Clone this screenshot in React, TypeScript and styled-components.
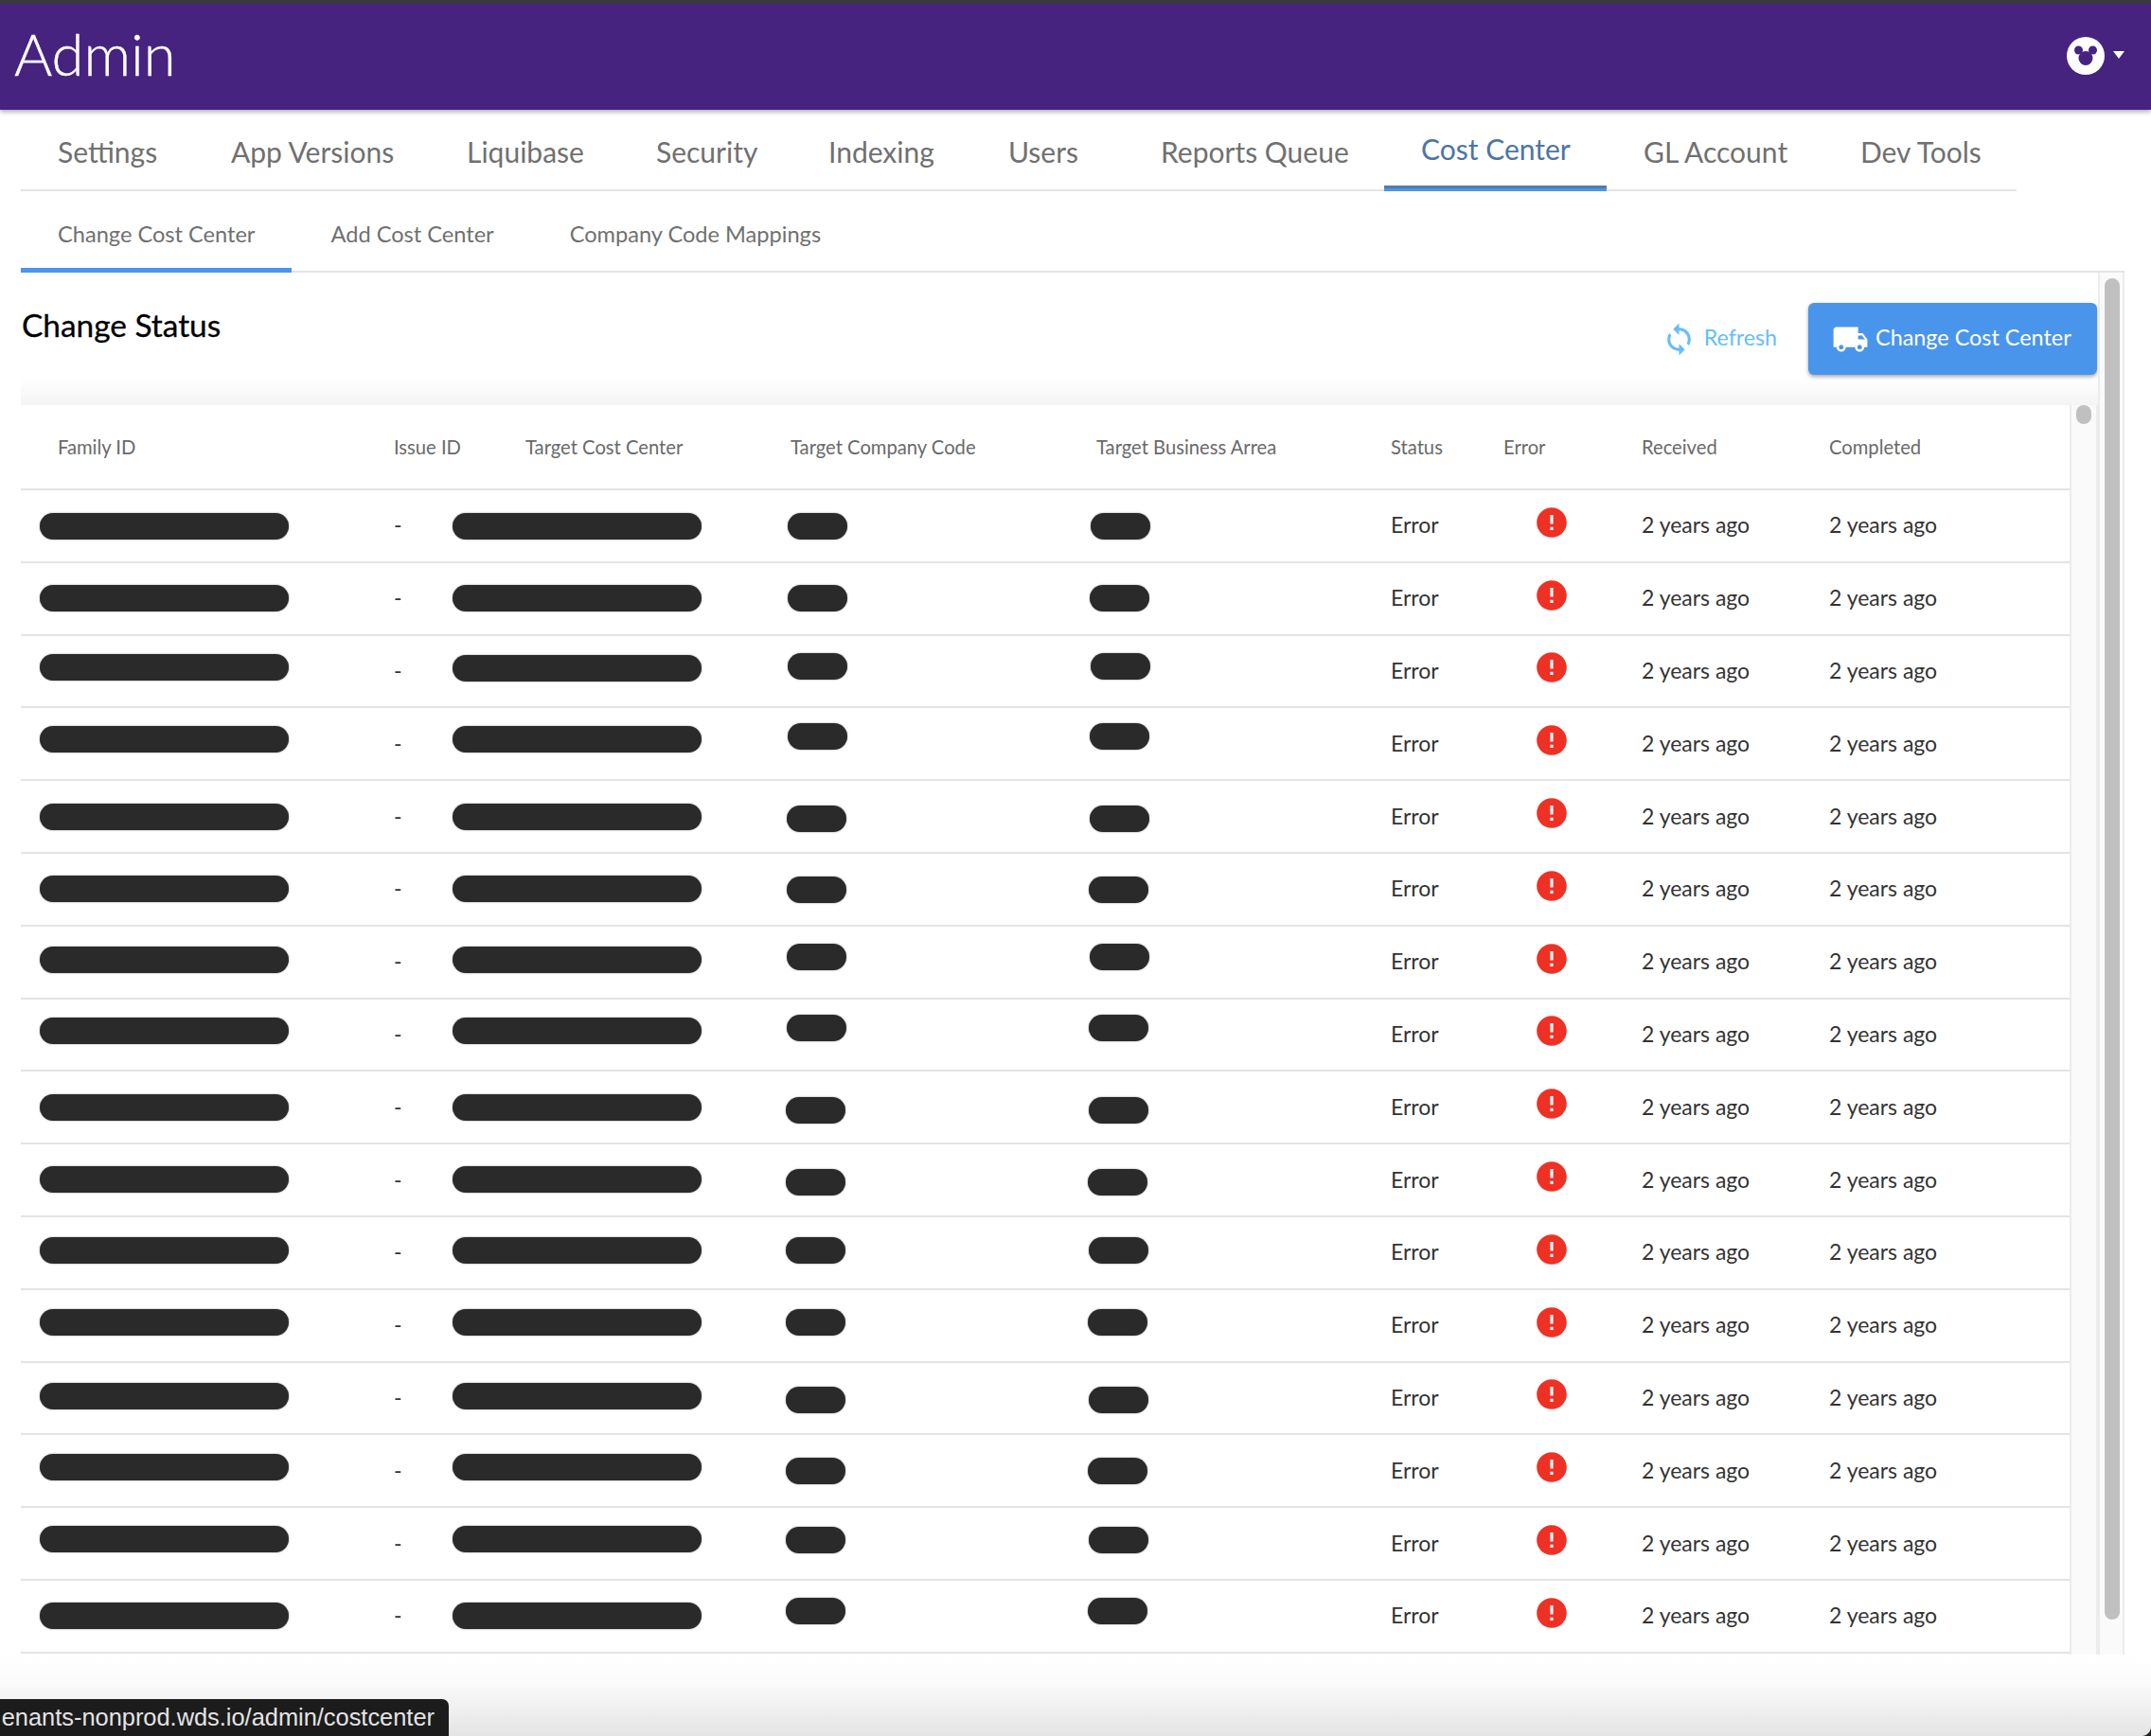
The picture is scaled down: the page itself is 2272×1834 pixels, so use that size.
import React from "react";
import styled, { createGlobalStyle } from "styled-components";
import { MdError, MdLocalShipping, MdSync } from "react-icons/md";

const Global = createGlobalStyle`
  html, body { margin: 0; padding: 0; background: #fff; }
  body { font-family: Lato, "Open Sans", "Liberation Sans", sans-serif; }
  * { box-sizing: border-box; }
`;

const Page = styled.div`
  position: relative;
  width: 2272px;
  height: 1834px;
  overflow: hidden;
  background: #fff;
  display: flex;
  flex-direction: column;
`;

const TopBar = styled.header`
  height: 116px;
  flex: none;
  background: #45237f;
  border-top: 4px solid #3a3a3a;
  box-shadow: 0 2px 5px rgba(0, 0, 0, 0.35);
  display: flex;
  align-items: center;
  justify-content: space-between;
  padding: 0 28px 0 15px;
  position: relative;
  z-index: 2;
`;

const Brand = styled.h1`
  margin: 0;
  font-size: 61.5px;
  line-height: 1;
  font-weight: 300;
  color: #fff;
  -webkit-text-stroke: 0.4px #fff;
  padding-bottom: 6px;
`;

const UserMenu = styled.div`
  display: flex;
  align-items: center;
  gap: 9px;
  padding-bottom: 3px;
`;

const Caret = styled.span`
  width: 0;
  height: 0;
  border-left: 6px solid transparent;
  border-right: 6px solid transparent;
  border-top: 8px solid #fff;
  margin-bottom: 2px;
`;

const MainTabs = styled.nav`
  display: flex;
  margin: 0 0 0 22px;
  width: 2108px;
  height: 86px;
  flex: none;
  border-bottom: 2px solid #e4e4e4;
`;

const MainTab = styled.div<{ $active?: boolean; $width: number }>`
  width: ${(p) => p.$width}px;
  flex: none;
  padding: ${(p) => (p.$active ? "23px" : "26px")} 0 0 39px;
  font-size: 30px;
  line-height: 36px;
  white-space: nowrap;
  color: ${(p) => (p.$active ? "#4d74a6" : "#707070")};
  ${(p) =>
    p.$active
      ? `height: 86px; border-bottom: 3px solid #4a95ec; box-shadow: inset 0 -3px 0 #567aa8;`
      : ""}
`;

const SubTabs = styled.nav`
  display: flex;
  margin-left: 22px;
  width: 2222px;
  height: 86px;
  flex: none;
  border-bottom: 2px solid #e4e4e4;
`;

const SubTab = styled.div<{ $active?: boolean }>`
  padding: 30px 39px 0;
  margin-right: 2px;
  font-size: 23.6px;
  line-height: 30px;
  height: 86px;
  white-space: nowrap;
  color: #707070;
  border-bottom: 5px solid ${(p) => (p.$active ? "#4a95ec" : "transparent")};
`;

const Panel = styled.section`
  display: flex;
  margin-left: 22px;
  width: 2222px;
  height: 1460px;
  flex: none;
`;

const PanelBody = styled.div`
  width: 2194px;
  flex: none;
  display: flex;
  flex-direction: column;
`;

const Track = styled.div<{ $width: number; $pad: number }>`
  width: ${(p) => p.$width}px;
  flex: none;
  background: #fafafa;
  border-left: 2px solid #ececec;
  border-right: 2px solid #ececec;
  padding: ${(p) => p.$pad}px 5px 0 5px;
`;

const Thumb = styled.div<{ $height: number; $width: number }>`
  width: ${(p) => p.$width}px;
  height: ${(p) => p.$height}px;
  border-radius: 8px;
  background: #c0c0c0;
`;

const PanelHead = styled.div`
  height: 140px;
  flex: none;
  display: flex;
  justify-content: space-between;
  padding: 0 1px 0 1px;
  background: linear-gradient(to bottom, #fff 0, #fff 112px, #f4f4f4 140px);
`;

const Title = styled.h2`
  margin: 35px 0 0;
  font-size: 33.4px;
  line-height: 40px;
  font-weight: 400;
  -webkit-text-stroke: 0.3px #000;
  color: #000;
`;

const Actions = styled.div`
  display: flex;
  align-items: flex-start;
  padding-top: 32px;
`;

const RefreshButton = styled.button`
  display: flex;
  align-items: center;
  gap: 8px;
  height: 76px;
  padding: 0 33px 0 0;
  border: 0;
  background: none;
  font: inherit;
  font-size: 23.2px;
  color: #66bdf9;
`;

const PrimaryButton = styled.button`
  display: flex;
  align-items: center;
  gap: 7px;
  width: 305px;
  height: 76px;
  padding: 0 0 0 25px;
  border: 0;
  border-radius: 6px;
  background: #4a95ec;
  box-shadow: 0 2px 4px rgba(0, 0, 0, 0.35);
  font: inherit;
  font-size: 23.4px;
  color: #fff;
  white-space: nowrap;
`;

const ButtonLabel = styled.span`
  margin-bottom: 5px;
`;

const TableWrap = styled.div`
  display: flex;
  height: 1320px;
  flex: none;
`;

const Table = styled.div`
  width: 2164px;
  flex: none;
`;

const columns = "394px 139px 280px 323px 311px 119px 146px 198px 1fr";

const HeadRow = styled.div`
  display: grid;
  grid-template-columns: ${columns};
  align-items: center;
  height: 90px;
  border-bottom: 2px solid #e4e4e4;
  font-size: 20.2px;
  color: #6a6a6a;
  white-space: nowrap;
`;

const Row = styled.div`
  display: grid;
  grid-template-columns: ${columns};
  align-items: center;
  height: 76.8px;
  border-bottom: 2px solid #e4e4e4;
  font-size: 23px;
  color: #333;
  white-space: nowrap;
`;

const HeadCell = styled.div<{ $first?: boolean }>`
  padding-left: ${(p) => (p.$first ? "39px" : "0")};
`;

const Cell = styled.div`
  position: relative;
  padding-bottom: 2px;
`;

const Redaction = styled.span<{ $left: number; $width: number; $dy: number }>`
  position: absolute;
  left: ${(p) => p.$left}px;
  top: 50%;
  width: ${(p) => p.$width}px;
  height: 28px;
  margin-top: ${(p) => p.$dy - 14}px;
  border-radius: 14px;
  background: #2a2a2a;
  box-shadow: 0 0 2px rgba(0, 0, 0, 0.45);
`;

const ErrorMark = styled.span`
  display: flex;
  width: 38px;
  margin-left: 32px;
  margin-bottom: 5px;
  color: #ee3124;
`;

const Footer = styled.div`
  flex: 1;
  background: linear-gradient(to bottom, #fff 0, #fcfcfc 30%, #e4e4e4 100%);
`;

const StatusBubble = styled.div`
  position: absolute;
  left: 0;
  bottom: 0;
  width: 474px;
  height: 39px;
  overflow: hidden;
  display: flex;
  justify-content: flex-end;
  align-items: center;
  padding-right: 15px;
  border-top-right-radius: 7px;
  background: #1c1c1c;
  color: #e4e4e4;
  font-family: "Liberation Sans", Arial, sans-serif;
  font-size: 25.4px;
  white-space: nowrap;
`;

const WindowCorner = styled.div`
  position: absolute;
  right: 0;
  bottom: 0;
  width: 10px;
  height: 10px;
  background: radial-gradient(circle at 0 0, transparent 9.5px, #222 10.5px);
`;

const companyDy = [0.7, -0.7, -5, -8, 2, 0.7, -5, -6.5, 3.6, 2, -2, -3.6, 2, 0.7, -3.6, -5];
const familyDy = [0.7, -0.7, -3.6, -5, 0.7, -0.7, -2, -3.6, 0.7, -0.7, -2, -3.6, -2, -3.6, -5, -0.7];
const costDy = [0.7, -0.7, -2.5, -5, 0.7, -0.7, -2, -3.6, 0.7, -0.7, -2, -3.6, -2, -3.6, -5, -0.7];
const companyLeft = [-3, -3, -3, -3, -4, -4, -4, -4, -5, -5, -5, -5, -5, -5, -5, -5];
const businessLeft = [-6, -7, -6, -7, -7, -8, -7, -8, -8, -9, -8, -9, -8, -9, -8, -9];

const tabs: [string, number][] = [
  ["Settings", 183],
  ["App Versions", 249],
  ["Liquibase", 200],
  ["Security", 182],
  ["Indexing", 190],
  ["Users", 161],
  ["Reports Queue", 275],
  ["Cost Center", 235],
  ["GL Account", 229],
  ["Dev Tools", 220],
];
const subTabs = ["Change Cost Center", "Add Cost Center", "Company Code Mappings"];
const heads = ["Family ID", "Issue ID", "Target Cost Center", "Target Company Code", "Target Business Arrea", "Status", "Error", "Received", "Completed"];

function MouseAvatar() {
  return (
    <svg width="40" height="40" viewBox="0 0 40 40" aria-hidden="true">
      <circle cx="20" cy="20" r="20" fill="#fff" />
      <circle cx="20" cy="22.5" r="7.5" fill="#45237f" />
      <circle cx="12.5" cy="14" r="4.5" fill="#45237f" />
      <circle cx="27.5" cy="14" r="4.5" fill="#45237f" />
    </svg>
  );
}

export default function App() {
  return (
    <Page>
      <Global />
      <TopBar>
        <Brand>Admin</Brand>
        <UserMenu>
          <MouseAvatar />
          <Caret />
        </UserMenu>
      </TopBar>
      <MainTabs>
        {tabs.map(([t, w]) => (
          <MainTab key={t} $width={w} $active={t === "Cost Center"}>{t}</MainTab>
        ))}
      </MainTabs>
      <SubTabs>
        {subTabs.map((t, i) => (
          <SubTab key={t} $active={i === 0}>{t}</SubTab>
        ))}
      </SubTabs>
      <Panel>
        <PanelBody>
          <PanelHead>
            <Title>Change Status</Title>
            <Actions>
              <RefreshButton>
                <MdSync size={37} />
                <ButtonLabel>Refresh</ButtonLabel>
              </RefreshButton>
              <PrimaryButton>
                <MdLocalShipping size={39} />
                <ButtonLabel>Change Cost Center</ButtonLabel>
              </PrimaryButton>
            </Actions>
          </PanelHead>
          <TableWrap>
            <Table>
              <HeadRow>
                {heads.map((h, i) => (
                  <HeadCell key={h} $first={i === 0}>{h}</HeadCell>
                ))}
              </HeadRow>
              {companyDy.map((dy, i) => (
                <Row key={i}>
                  <Cell>
                    <Redaction $left={20} $width={263} $dy={familyDy[i]} />
                  </Cell>
                  <Cell>-</Cell>
                  <Cell>
                    <Redaction $left={-77} $width={263} $dy={costDy[i]} />
                  </Cell>
                  <Cell>
                    <Redaction $left={companyLeft[i]} $width={63} $dy={dy} />
                  </Cell>
                  <Cell>
                    <Redaction $left={businessLeft[i]} $width={63} $dy={dy} />
                  </Cell>
                  <Cell>Error</Cell>
                  <Cell>
                    <ErrorMark>
                      <MdError size={38} />
                    </ErrorMark>
                  </Cell>
                  <Cell>2 years ago</Cell>
                  <Cell>2 years ago</Cell>
                </Row>
              ))}
            </Table>
            <Track $width={30} $pad={0}>
              <Thumb $width={16} $height={20} />
            </Track>
          </TableWrap>
        </PanelBody>
        <Track $width={28} $pad={6}>
          <Thumb $width={16} $height={1417} />
        </Track>
      </Panel>
      <Footer />
      <StatusBubble>enants-nonprod.wds.io/admin/costcenter</StatusBubble>
      <WindowCorner />
    </Page>
  );
}
